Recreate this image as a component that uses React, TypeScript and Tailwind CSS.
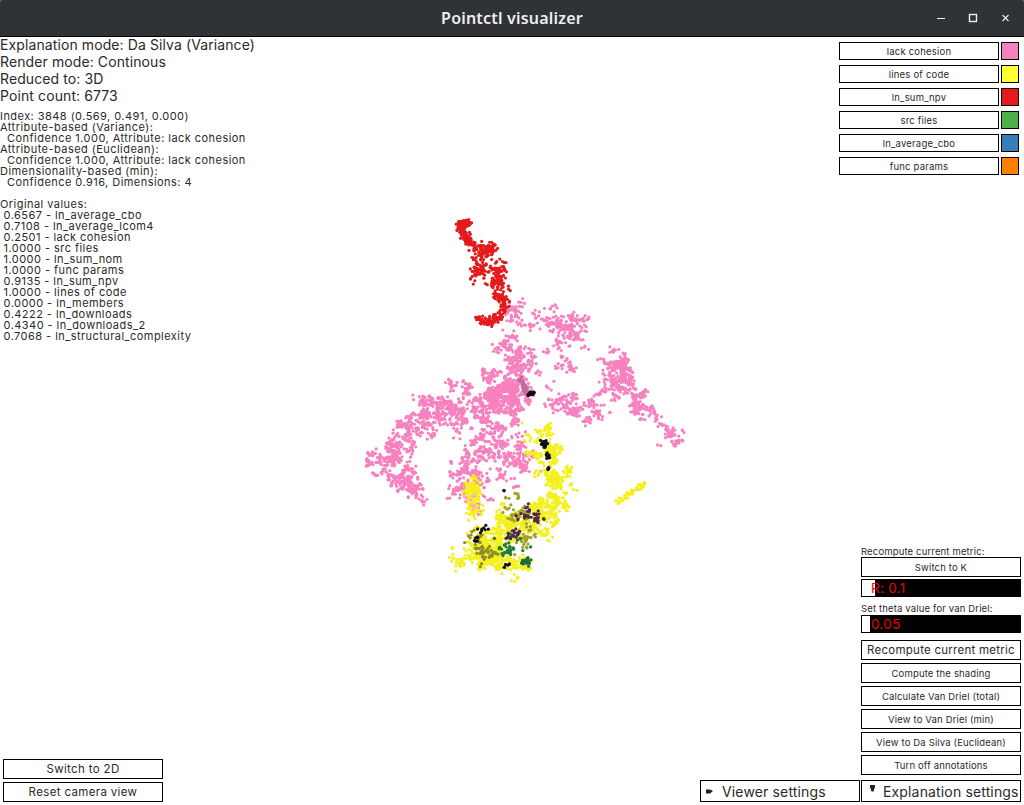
import React from "react";

type Blob = { color: string; n: number; spread: number; path: [number, number][]; clumps?: number };

const PINK = "#f781bf";
const YELLOW = "#f4f01e";

const blobs: Blob[] = [
  // red strand at the top
  { color: "#e41a1c", n: 80, spread: 1.6, path: [[458, 225], [464, 223], [470, 223]] },
  { color: "#e41a1c", n: 150, spread: 2.6, path: [[460, 228], [468, 238], [468, 243], [477, 247], [487, 252], [495, 244]] },
  { color: "#e41a1c", n: 170, spread: 3.8, path: [[487, 252], [477, 265], [474, 276], [488, 268], [503, 267], [493, 282], [505, 287]] },
  { color: "#e41a1c", n: 150, spread: 2, path: [[494, 294], [503, 298], [505, 310], [497, 318], [487, 323], [478, 316]] },
  // pink wings
  { color: PINK, n: 300, spread: 7, clumps: 70, path: [[520, 304], [520, 325], [545, 315], [565, 325], [578, 322], [572, 345], [556, 368]] },
  { color: PINK, n: 200, spread: 7, clumps: 40, path: [[505, 345], [520, 355], [530, 375], [510, 385]] },
  { color: PINK, n: 520, spread: 9, clumps: 60, path: [[500, 368], [505, 390], [520, 395], [490, 400]] },
  { color: PINK, n: 560, spread: 10, clumps: 100, path: [[490, 402], [455, 405], [430, 412], [408, 420], [405, 435]] },
  { color: PINK, n: 280, spread: 7, clumps: 55, path: [[405, 435], [398, 448], [382, 462], [400, 470], [415, 478]] },
  { color: PINK, n: 110, spread: 3, clumps: 20, path: [[395, 480], [410, 485], [418, 495]] },
  { color: PINK, n: 320, spread: 7, clumps: 70, path: [[556, 402], [580, 408], [600, 400], [615, 375], [628, 400]] },
  { color: PINK, n: 270, spread: 5, clumps: 55, path: [[600, 362], [620, 362], [637, 395], [648, 415], [665, 428], [680, 438]] },
  { color: PINK, n: 400, spread: 9, clumps: 90, path: [[490, 415], [485, 440], [470, 465], [462, 490], [480, 490]] },
  { color: PINK, n: 210, spread: 8, clumps: 50, path: [[505, 420], [515, 445], [525, 460], [500, 470]] },
  // yellow band
  { color: YELLOW, n: 500, spread: 8, clumps: 80, path: [[537, 432], [545, 447], [550, 467], [557, 487], [547, 503], [550, 518], [537, 527]] },
  { color: YELLOW, n: 170, spread: 4, path: [[473, 483], [472, 497], [474, 513]] },
  { color: "#f7a8c8", n: 8, spread: 4, path: [[470, 495], [475, 505]] },
  { color: YELLOW, n: 50, spread: 1.5, path: [[617, 502], [630, 493], [645, 485]] },
  { color: YELLOW, n: 460, spread: 8, clumps: 90, path: [[537, 527], [507, 517], [500, 537], [493, 553], [473, 557], [463, 560]] },
  { color: YELLOW, n: 260, spread: 6, clumps: 60, path: [[473, 537], [488, 553], [510, 567], [530, 563]] },
  // olive, purple, green and black clusters over the yellow band
  { color: "#a3a12c", n: 90, spread: 5, clumps: 22, path: [[510, 495], [517, 505], [530, 530], [515, 545]] },
  { color: "#8e8c2a", n: 60, spread: 5, clumps: 20, path: [[470, 538], [482, 545], [490, 560]] },
  { color: "#4b2a4d", n: 38, spread: 2.4, clumps: 10, path: [[519, 516], [526, 511], [537, 517], [539, 525]] },
  { color: "#4b2a4d", n: 30, spread: 1.8, path: [[507, 537], [515, 533], [521, 532]] },
  { color: "#1d7a3b", n: 30, spread: 4.5, clumps: 16, path: [[501, 549], [512, 548], [522, 542]] },
  { color: "#1d6b3b", n: 18, spread: 2.5, path: [[522, 561], [530, 563]] },
  { color: "#111", n: 22, spread: 1.5, path: [[542, 441], [546, 447]] },
  { color: "#111", n: 8, spread: 1.2, path: [[548, 454], [548, 458]] },
  { color: "#111", n: 4, spread: 0.8, path: [[548, 468], [548, 469]] },
  { color: "#111", n: 2, spread: 0.4, path: [[504, 491], [504, 491]] },
  { color: "#111", n: 14, spread: 1.4, path: [[478, 528], [486, 527], [482, 535], [470, 541]] },
  { color: "#111", n: 6, spread: 1.2, path: [[503, 567], [510, 564]] },
  // centre streak
  { color: "#c36a9c", n: 30, spread: 1.2, path: [[520, 378], [527, 394]] },
  { color: "#111", n: 18, spread: 0.9, path: [[528, 395], [535, 393]] },
];

// small seeded random so the cloud stays the same on every render
function makeRandom(seed: number) {
  let s = seed;
  return () => {
    s = (s * 1664525 + 1013904223) % 4294967296;
    return s / 4294967296;
  };
}

function buildPoints() {
  const rnd = makeRandom(3848);
  const gauss = () => (rnd() + rnd() + rnd() - 1.5) / 0.5;
  const out: { x: number; y: number; c: string }[] = [];
  for (const b of blobs) {
    const lens = b.path.slice(1).map((p, i) => Math.hypot(p[0] - b.path[i][0], p[1] - b.path[i][1]));
    const total = lens.reduce((a, c) => a + c, 0) || 1;
    const sample = () => {
      let d = rnd() * total;
      let k = 0;
      while (k < lens.length - 1 && d > lens[k]) {
        d -= lens[k];
        k++;
      }
      const t = lens[k] ? d / lens[k] : 0;
      return {
        x: b.path[k][0] + (b.path[k + 1][0] - b.path[k][0]) * t + gauss() * b.spread,
        y: b.path[k][1] + (b.path[k + 1][1] - b.path[k][1]) * t + gauss() * b.spread,
      };
    };
    // clumped blobs give the blotchy look of the embedding
    const centers = b.clumps ? Array.from({ length: b.clumps }, sample) : [];
    for (let i = 0; i < b.n; i++) {
      if (centers.length) {
        const c = centers[Math.floor(rnd() * centers.length)];
        out.push({ x: c.x + gauss() * 2.2, y: c.y + gauss() * 2.2, c: b.color });
      } else {
        const p = sample();
        out.push({ x: p.x, y: p.y, c: b.color });
      }
    }
  }
  return out;
}

const points = buildPoints();

const legend = [
  { label: "lack cohesion", swatch: "bg-[#f781bf]" },
  { label: "lines of code", swatch: "bg-[#ffff33]" },
  { label: "ln_sum_npv", swatch: "bg-[#e41a1c]" },
  { label: "src files", swatch: "bg-[#4daf4a]" },
  { label: "ln_average_cbo", swatch: "bg-[#377eb8]" },
  { label: "func params", swatch: "bg-[#ff7f00]" },
];

const info = [
  "Index: 3848 (0.569, 0.491, 0.000)",
  "Attribute-based (Variance):",
  "  Confidence 1.000, Attribute: lack cohesion",
  "Attribute-based (Euclidean):",
  "  Confidence 1.000, Attribute: lack cohesion",
  "Dimensionality-based (min):",
  "  Confidence 0.916, Dimensions: 4",
  " ",
  "Original values:",
  " 0.6567 - ln_average_cbo",
  " 0.7108 - ln_average_lcom4",
  " 0.2501 - lack cohesion",
  " 1.0000 - src files",
  " 1.0000 - ln_sum_nom",
  " 1.0000 - func params",
  " 0.9135 - ln_sum_npv",
  " 1.0000 - lines of code",
  " 0.0000 - ln_members",
  " 0.4222 - ln_downloads",
  " 0.4340 - ln_downloads_2",
  " 0.7068 - ln_structural_complexity",
];

const Btn = ({ children, className = "" }: { children: React.ReactNode; className?: string }) => (
  <div className={`flex items-center justify-center border border-black bg-white pt-[2px] whitespace-nowrap text-[#2a2a2a] ${className}`}>
    {children}
  </div>
);

const Slider = ({ text, thumb }: { text: string; thumb: string }) => (
  <div className="relative flex h-[18px] w-[160px] items-center bg-black pl-[10px] text-[13.5px] tracking-[0.3px] text-[#f00000]">
    <div className={`absolute bottom-[1px] left-[1px] top-[1px] bg-white ${thumb}`} />
    <span className="relative">{text}</span>
  </div>
);

export default function App() {
  return (
    <div className="flex h-[805px] w-[1024px] flex-col overflow-hidden bg-white font-['Inter',sans-serif] text-[#2a2a2a]">
      {/* Title bar */}
      <div className="bg-[#5a8f3c]">
        <div className="relative flex h-[37px] items-center justify-center rounded-t-[3px] border-b border-black bg-[#2f3336]">
          <span className="font-['Noto_Sans',sans-serif] text-[16px] font-semibold tracking-[0.2px] text-[#eeeeee]">Pointctl visualizer</span>
          <div className="absolute right-0 top-0 flex h-full items-center">
            <svg width="34" height="36" viewBox="0 0 34 36" className="text-[#eee]">
              <path d="M13 18.5h8" stroke="currentColor" strokeWidth="1" />
            </svg>
            <svg width="34" height="36" viewBox="0 0 34 36" className="text-[#eee]">
              <rect x="11.5" y="14.5" width="7" height="7" fill="none" stroke="currentColor" strokeWidth="1.4" />
            </svg>
            <svg width="32" height="36" viewBox="0 0 32 36" className="text-[#eee]">
              <path d="M10.5 15l6 6M16.5 15l-6 6" stroke="currentColor" strokeWidth="1.1" />
            </svg>
          </div>
        </div>
      </div>

      {/* Canvas with overlaid panels */}
      <div className="relative flex flex-1 justify-between">
        <svg className="absolute inset-0 h-full w-full blur-[0.4px]" viewBox="0 37 1024 768">
          {points.map((p, i) => (
            <circle key={i} cx={p.x} cy={p.y} r={1.6} fill={p.c} />
          ))}
        </svg>

        {/* Left column */}
        <div className="relative flex flex-col justify-between pb-[3px]">
          <div>
            <div className="-mt-[1px] text-[14px] leading-[17px] tracking-[0.1px]">
              <div>Explanation mode: Da Silva (Variance)</div>
              <div>Render mode: Continous</div>
              <div>Reduced to: 3D</div>
              <div>Point count: 6773</div>
            </div>
            <div className="mt-[7px] text-[11px] leading-[11px] tracking-[0.45px] whitespace-pre">
              {info.map((line, i) => (
                <div key={i}>{line}</div>
              ))}
            </div>
          </div>
          <div className="ml-[3px] flex flex-col gap-[3px] text-[11.5px] tracking-[0.35px]">
            <Btn className="h-[20px] w-[160px]">Switch to 2D</Btn>
            <Btn className="h-[20px] w-[160px]">Reset camera view</Btn>
          </div>
        </div>

        {/* Right column */}
        <div className="relative flex flex-col items-end justify-between pb-[3px] pr-[3px]">
          <div className="mr-[2px] mt-[5px] flex flex-col gap-[5px]">
            {legend.map((l) => (
              <div key={l.label} className="flex gap-[2px]">
                <Btn className="h-[18px] w-[160px] text-[9.5px] tracking-[0.2px]">{l.label}</Btn>
                <div className={`h-[18px] w-[18px] border border-black ${l.swatch}`} />
              </div>
            ))}
          </div>

          <div className="flex flex-col items-end">
            <div className="flex w-[160px] flex-col text-[9.5px] tracking-[0.15px]">
              <div className="h-[12px] pt-[1px] leading-[12px] whitespace-nowrap">Recompute current metric:</div>
              <Btn className="h-[20px]">Switch to K</Btn>
              <div className="mt-[2px]">
                <Slider text="R: 0.1" thumb="w-[13px]" />
              </div>
              <div className="mt-[5px] h-[13px] leading-[13px] whitespace-nowrap">Set theta value for van Driel:</div>
              <Slider text="0.05" thumb="w-[8px]" />
              <Btn className="mt-[7px] h-[20px] text-[11.5px] tracking-[0.25px]">Recompute current metric</Btn>
              <Btn className="mt-[3px] h-[20px]">Compute the shading</Btn>
              <Btn className="mt-[3px] h-[20px]">Calculate Van Driel (total)</Btn>
              <Btn className="mt-[3px] h-[20px]">View to Van Driel (min)</Btn>
              <Btn className="mt-[3px] h-[20px]">View to Da Silva (Euclidean)</Btn>
              <Btn className="mt-[3px] h-[20px]">Turn off annotations</Btn>
            </div>
            <div className="mt-[5px] flex gap-[1px] text-[14px] tracking-[0.15px]">
              <div className="flex h-[22px] w-[160px] items-center border border-black bg-white pl-[5px]">
                <svg width="8" height="5" viewBox="0 0 8 5" className="mr-[8px]">
                  <path d="M0 .5h4L7 2 4 4.5H0z" fill="#222" />
                </svg>
                <span className="whitespace-nowrap">Viewer settings</span>
              </div>
              <div className="flex h-[22px] w-[160px] items-center border border-black bg-white pl-[8px]">
                <svg width="5" height="7" viewBox="0 0 5 7" className="mb-[5px] mr-[8px]">
                  <path d="M0 0h5v2L3.5 6.5h-2L0 2z" fill="#222" />
                </svg>
                <span className="whitespace-nowrap">Explanation settings</span>
              </div>
            </div>
          </div>
        </div>
      </div>
    </div>
  );
}
